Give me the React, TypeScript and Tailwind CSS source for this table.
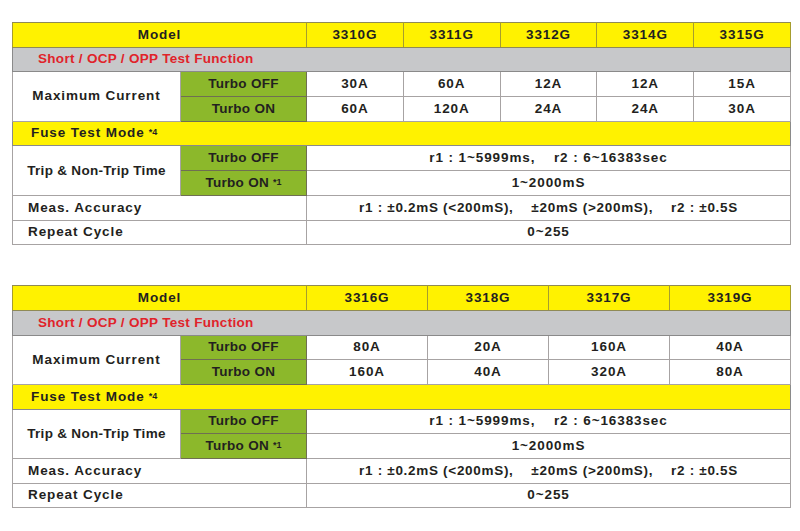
import React from 'react';

type Spec = {
  models: string[];
  turboOff: string[];
  turboOn: string[];
};

const SPECS: Spec[] = [
  {
    models: ['3310G', '3311G', '3312G', '3314G', '3315G'],
    turboOff: ['30A', '60A', '12A', '12A', '15A'],
    turboOn: ['60A', '120A', '24A', '24A', '30A'],
  },
  {
    models: ['3316G', '3318G', '3317G', '3319G'],
    turboOff: ['80A', '20A', '160A', '40A'],
    turboOn: ['160A', '40A', '320A', '80A'],
  },
];

const cellBase = 'h-[24.7px] p-0 text-center align-middle';
const white = `${cellBase} bg-white border border-[#a7a3a3]`;
const green = `${cellBase} bg-[#8cb82b] border border-[#6f6f52]`;
const yellow = `${cellBase} bg-[#fff200] border border-y-[#8f8a55] border-x-[#a69d2e]`;

function Sup({ children }: { children: React.ReactNode }) {
  return <sup className="relative -top-[2px] ml-[4px] text-[9px] tracking-normal">{children}</sup>;
}

function SpecTable({ spec }: { spec: Spec }) {
  const n = spec.models.length;
  return (
    <table className="w-[779px] table-fixed border-collapse border border-[#7d7d7d] text-[13.5px] font-bold tracking-[0.9px] text-[#231f20]">
      <colgroup>
        <col className="w-[168px]" />
        <col className="w-[126px]" />
        {spec.models.map((m) => (
          <col key={m} />
        ))}
      </colgroup>
      <tbody>
        <tr>
          <td colSpan={2} className={yellow}>Model</td>
          {spec.models.map((m) => (
            <td key={m} className={yellow}>{m}</td>
          ))}
        </tr>
        <tr>
          <td
            colSpan={n + 2}
            className={`${cellBase} bg-[#c7c8ca] border border-[#8a8a8a] text-left pl-[25px] text-[#e0232a] tracking-[0.3px]`}
          >
            Short / OCP / OPP Test Function
          </td>
        </tr>
        <tr>
          <td rowSpan={2} className={white}>Maximum Current</td>
          <td className={`${green} tracking-[0.3px]`}>Turbo OFF</td>
          {spec.turboOff.map((v, i) => (
            <td key={i} className={white}>{v}</td>
          ))}
        </tr>
        <tr>
          <td className={`${green} tracking-[0.3px]`}>Turbo ON</td>
          {spec.turboOn.map((v, i) => (
            <td key={i} className={white}>{v}</td>
          ))}
        </tr>
        <tr>
          <td
            colSpan={n + 2}
            className={`${cellBase} bg-[#fff200] border border-[#8a8a8a] text-left pl-[18px]`}
          >
            Fuse Test Mode<Sup>*4</Sup>
          </td>
        </tr>
        <tr>
          <td rowSpan={2} className={`${white} tracking-[0.3px]`}>Trip &amp; Non-Trip Time</td>
          <td className={`${green} tracking-[0.3px]`}>Turbo OFF</td>
          <td colSpan={n} className={white}>
            r1 : 1~5999ms,&nbsp;&nbsp;&nbsp; r2 : 6~16383sec
          </td>
        </tr>
        <tr>
          <td className={`${green} tracking-[0.3px]`}>
            Turbo ON<Sup>*1</Sup>
          </td>
          <td colSpan={n} className={white}>1~2000mS</td>
        </tr>
        <tr>
          <td colSpan={2} className={`${white} text-left pl-[15px]`}>Meas. Accuracy</td>
          <td colSpan={n} className={`${white} tracking-[0.7px]`}>
            r1 : ±0.2mS (&lt;200mS),&nbsp;&nbsp;&nbsp; ±20mS (&gt;200mS),&nbsp;&nbsp;&nbsp; r2 : ±0.5S
          </td>
        </tr>
        <tr>
          <td colSpan={2} className={`${white} text-left pl-[15px]`}>Repeat Cycle</td>
          <td colSpan={n} className={white}>0~255</td>
        </tr>
      </tbody>
    </table>
  );
}

export default function App() {
  return (
    <div className="w-[800px] h-[531px] bg-white pt-[22px] pl-[12px] font-['Liberation_Sans',Arial,sans-serif]">
      <div className="flex flex-col gap-[40px]">
        {SPECS.map((s, i) => (
          <SpecTable key={i} spec={s} />
        ))}
      </div>
    </div>
  );
}
